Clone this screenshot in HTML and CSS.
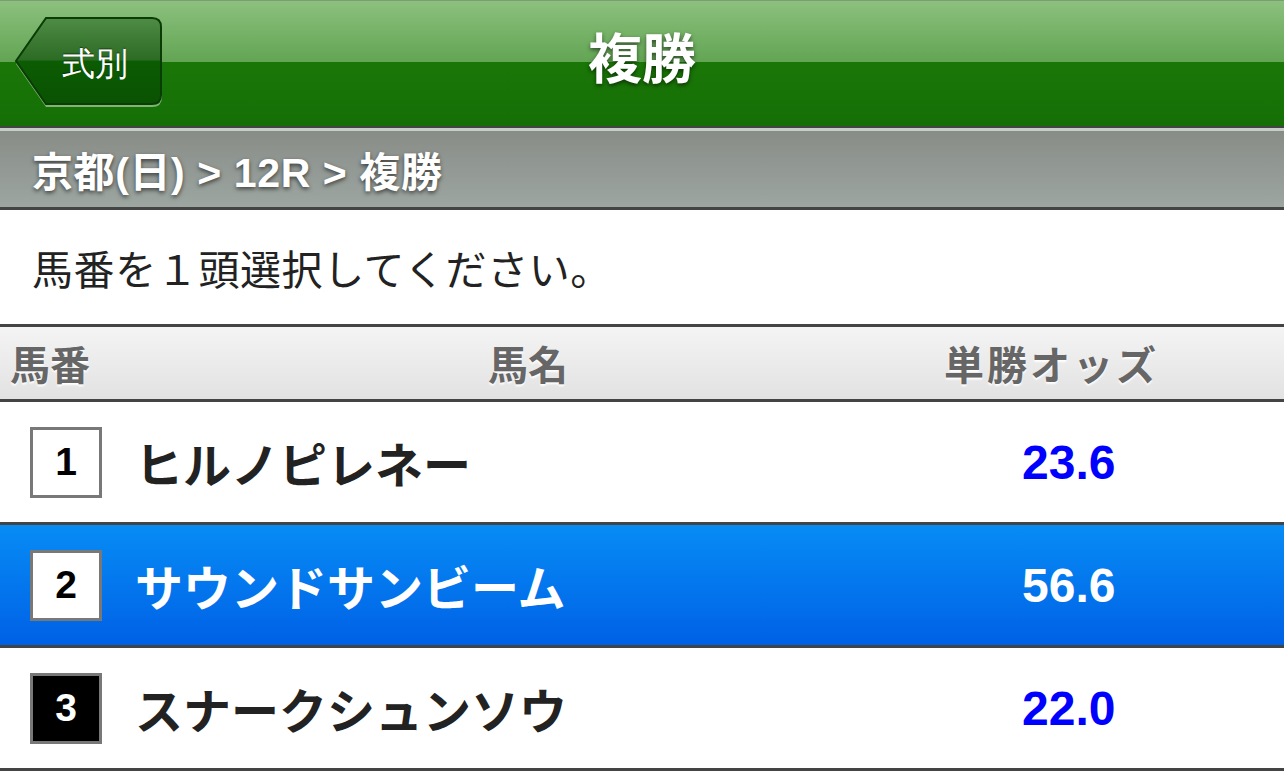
FILE: index.html
```html
<!DOCTYPE html>
<html lang="ja">
<head>
    <meta charset="UTF-8">
    <meta name="viewport" content="width=device-width, initial-scale=1.0">
    <title>複勝</title>
    <link rel="stylesheet" href="styles.css">
</head>
<body>
    <div class="screen">
        <header class="navbar">
            <div class="nav-left">
                <button class="back-btn">
                    <svg class="back-shape" viewBox="0 0 150 92" width="150" height="92">
                        <defs>
                            <linearGradient id="backFill" x1="0" y1="0" x2="0" y2="1">
                                <stop offset="0" stop-color="#4f8c46"/>
                                <stop offset="0.49" stop-color="#2c6b23"/>
                                <stop offset="0.5" stop-color="#0c5c03"/>
                                <stop offset="1" stop-color="#095202"/>
                            </linearGradient>
                        </defs>
                        <!-- light edge under the button -->
                        <path d="M32 3 H138 Q148 3 148 13 V80 Q148 90 138 90 H32 L2 47 Z" fill="#7fb573"/>
                        <path d="M32 1 H138 Q147 1 147 10 V78 Q147 87 138 87 H32 L2 44 Z" fill="url(#backFill)" stroke="#0a3c05" stroke-width="2"/>
                    </svg>
                    <span class="back-label">式別</span>
                </button>
            </div>
            <h1 class="nav-title">複勝</h1>
            <div></div>
        </header>

        <div class="breadcrumb">京都(日) &gt; 12R &gt; 複勝</div>

        <p class="guide">馬番を１頭選択してください。</p>

        <div class="list-head cols">
            <span class="c-num">馬番</span>
            <span class="c-name">馬名</span>
            <span class="c-odds">単勝オッズ</span>
        </div>

        <ul class="horse-list">
            <li class="horse cols">
                <span class="c-num"><span class="badge">1</span></span>
                <span class="c-name">ヒルノピレネー</span>
                <span class="c-odds">23.6</span>
            </li>
            <li class="horse cols selected">
                <span class="c-num"><span class="badge">2</span></span>
                <span class="c-name">サウンドサンビーム</span>
                <span class="c-odds">56.6</span>
            </li>
            <li class="horse cols">
                <span class="c-num"><span class="badge badge-black">3</span></span>
                <span class="c-name">スナークシュンソウ</span>
                <span class="c-odds">22.0</span>
            </li>
        </ul>
    </div>
</body>
</html>
```

FILE: styles.css
```css
* {
    margin: 0;
    padding: 0;
    box-sizing: border-box;
}

body {
    font-family: "Liberation Sans", "Noto Sans CJK JP", sans-serif;
    background: #fff;
    color: #222;
}

.screen {
    width: 1284px;
}

/* top bar */
.navbar {
    height: 128px;
    display: grid;
    grid-template-columns: 1fr auto 1fr;
    align-items: center;
    border-top: 1px solid #7c9c73;
    border-bottom: 2px solid #444;
    background: linear-gradient(#8cc07e 0, #62a553 61px, #1a7707 61px, #156f06 100%);
}

.nav-left {
    align-self: start;
    padding-top: 16px;
}

.back-btn {
    position: relative;
    display: block;
    width: 150px;
    height: 92px;
    margin-left: 14px;
    background: none;
    border: none;
    cursor: pointer;
}

.back-shape {
    position: absolute;
    left: 0;
    top: 0;
}

.back-label {
    position: relative;
    display: block;
    padding-left: 48px;
    padding-top: 2px;
    line-height: 88px;
    text-align: left;
    font-size: 33px;
    color: #fff;
    text-shadow: 0 -1px 1px rgba(0, 0, 0, 0.5);
}

.nav-title {
    font-size: 54px;
    font-weight: bold;
    line-height: 1;
    color: #fff;
    padding-bottom: 8px;
    text-shadow: 0 2px 4px rgba(0, 0, 0, 0.55);
}

/* breadcrumb */
.breadcrumb {
    height: 82px;
    display: flex;
    align-items: center;
    padding-left: 32px;
    border-top: 3px solid #c6cfc7;
    border-bottom: 3px solid #444;
    background: linear-gradient(#888c87, #9da6a1);
    color: #fff;
    font-size: 41px;
    font-weight: bold;
    letter-spacing: 0.6px;
    text-shadow: 0 2px 4px rgba(0, 0, 0, 0.6);
}

.guide {
    height: 117px;
    display: flex;
    align-items: center;
    padding-left: 32px;
    border-bottom: 3px solid #444;
    font-size: 41px;
    letter-spacing: 0.6px;
    color: #222;
}

/* table */
.cols {
    display: grid;
    grid-template-columns: 130px 796px 1fr;
    align-items: center;
}

.list-head {
    height: 75px;
    border-bottom: 3px solid #444;
    background: linear-gradient(#f4f4f4, #e2e2e2);
    font-size: 40px;
    font-weight: bold;
    color: #666;
    text-shadow: 0 2px 2px #fff;
}

.list-head .c-num {
    padding-left: 10px;
}

.list-head .c-name {
    text-align: center;
}

.list-head .c-odds {
    padding-left: 18px;
    letter-spacing: 3px;
}

.horse-list {
    list-style: none;
}

.horse {
    height: 123px;
    border-bottom: 3px solid #444;
    font-weight: bold;
}

.horse .c-name {
    padding-left: 5px;
    font-size: 48px;
    color: #222;
}

.horse .c-odds {
    padding-left: 96px;
    font-size: 48px;
    color: #00f;
}

.badge {
    display: flex;
    align-items: center;
    justify-content: center;
    width: 72px;
    height: 71px;
    margin-left: 30px;
    border: 3px solid #787878;
    background: #fff;
    color: #000;
    font-size: 39px;
    font-weight: bold;
}

.badge-black {
    background: #000;
    color: #fff;
}

.selected {
    background: linear-gradient(#078cf5, #0061e6);
}

.selected .c-name,
.selected .c-odds {
    color: #fff;
}
```
